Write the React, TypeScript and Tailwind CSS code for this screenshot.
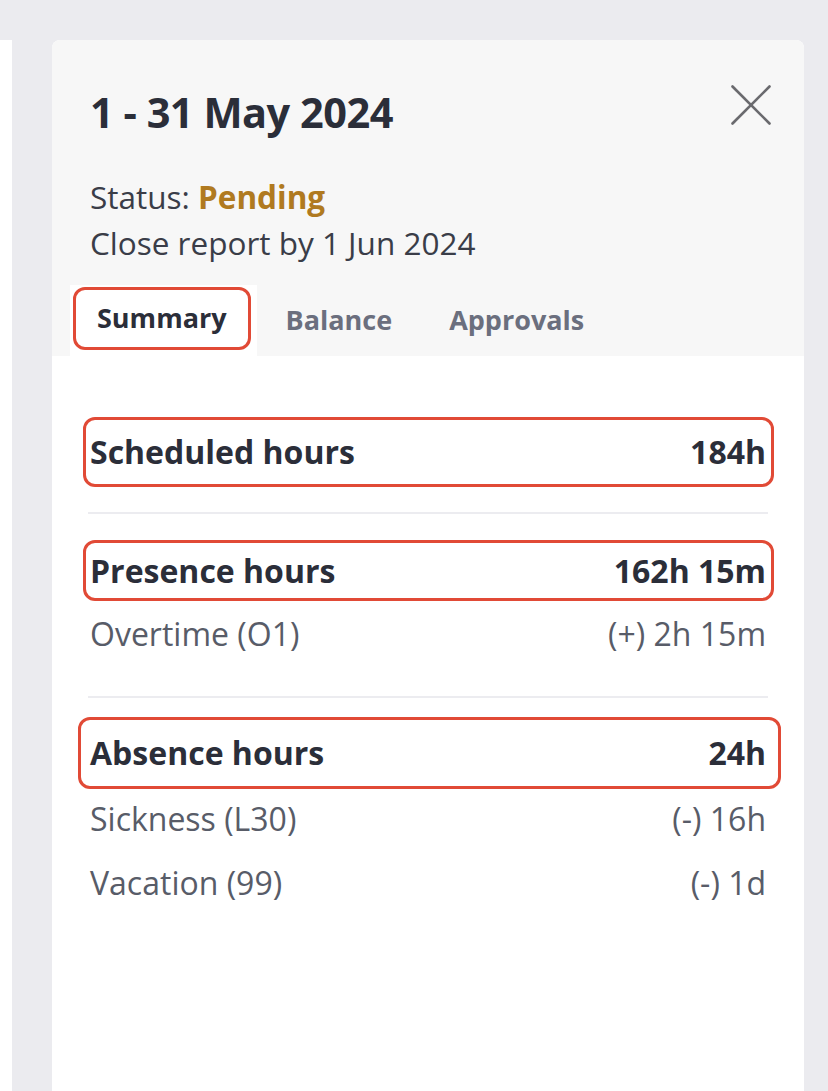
import { X } from "lucide-react";

const red = "border-[3px] border-[#e14a36] rounded-[12px]";

function Row({ label, value, bold }: { label: string; value: string; bold?: boolean }) {
    return (
        <div className={`flex items-center justify-between ${bold ? "font-bold text-[#2b2e39]" : "text-[#585c68]"}`}>
            <span>{label}</span>
            <span>{value}</span>
        </div>
    );
}

export default function App() {
    return (
        <div className="h-[1091px] overflow-hidden bg-[#ebebef] flex pt-[40px]" style={{ fontFamily: "'Open Sans', 'Noto Sans', sans-serif" }}>
            <div className="w-[12px] bg-white" />
            <div className="ml-[40px] w-[752px] bg-white rounded-t-[8px] flex flex-col">
                {/* Header */}
                <header className="bg-[#f7f7f7] rounded-t-[8px] relative">
                    <div className="px-[38px] pt-[49px]">
                        <h1 className="text-[41.5px] leading-[47px] font-bold text-[#2b2e39] tracking-[-0.5px]">1 - 31 May 2024</h1>
                        <button className="absolute right-[16px] top-[28px] text-[#6a6a6e]">
                            <X size={74} strokeWidth={0.85} />
                        </button>
                        <div className="mt-[38px] text-[31.5px] leading-[46px] text-[#3a3d48]">
                            <p>
                                Status: <span className="font-bold text-[#b07a20]">Pending</span>
                            </p>
                            <p>Close report by 1 Jun 2024</p>
                        </div>
                    </div>
                    <nav className="mt-[19px] ml-[18px] flex text-[27px] font-bold">
                        <div className="bg-white pl-[3px] pr-[6px] pt-[2px] pb-[6px]">
                            <span className={`${red} h-[63px] pl-[21px] pr-[21px] flex items-center text-[#2b2e39]`}>Summary</span>
                        </div>
                        <span className="h-[71px] px-[29px] flex items-center text-[#6b6f7e]">Balance</span>
                        <span className="h-[71px] px-[28px] flex items-center text-[#6b6f7e]">Approvals</span>
                    </nav>
                </header>

                {/* Body */}
                <div className="px-[38px] pt-[61px] text-[32px] leading-[46px]">
                    <div className={`${red} -ml-[7px] -mr-[8px] h-[70px] pl-[4px] pr-[5px] flex flex-col justify-center`}>
                        <Row label="Scheduled hours" value="184h" bold />
                    </div>
                    <div className="mt-[25px] -mx-[2px] h-[2px] bg-[#ececf0]" />

                    <div className={`${red} mt-[26px] -ml-[7px] -mr-[8px] h-[61px] pl-[4px] pr-[5px] flex flex-col justify-center`}>
                        <Row label="Presence hours" value="162h 15m" bold />
                    </div>
                    <div className="mt-[10px]">
                        <Row label="Overtime (O1)" value="(+) 2h 15m" />
                    </div>
                    <div className="mt-[39px] -mx-[2px] h-[2px] bg-[#ececf0]" />

                    <div className={`${red} mt-[19px] -ml-[12px] -mr-[15px] h-[72px] pl-[9px] pr-[12px] flex flex-col justify-center`}>
                        <Row label="Absence hours" value="24h" bold />
                    </div>
                    <div className="mt-[7px] flex flex-col gap-[18px]">
                        <Row label="Sickness (L30)" value="(-) 16h" />
                        <Row label="Vacation (99)" value="(-) 1d" />
                    </div>
                </div>
            </div>
        </div>
    );
}
